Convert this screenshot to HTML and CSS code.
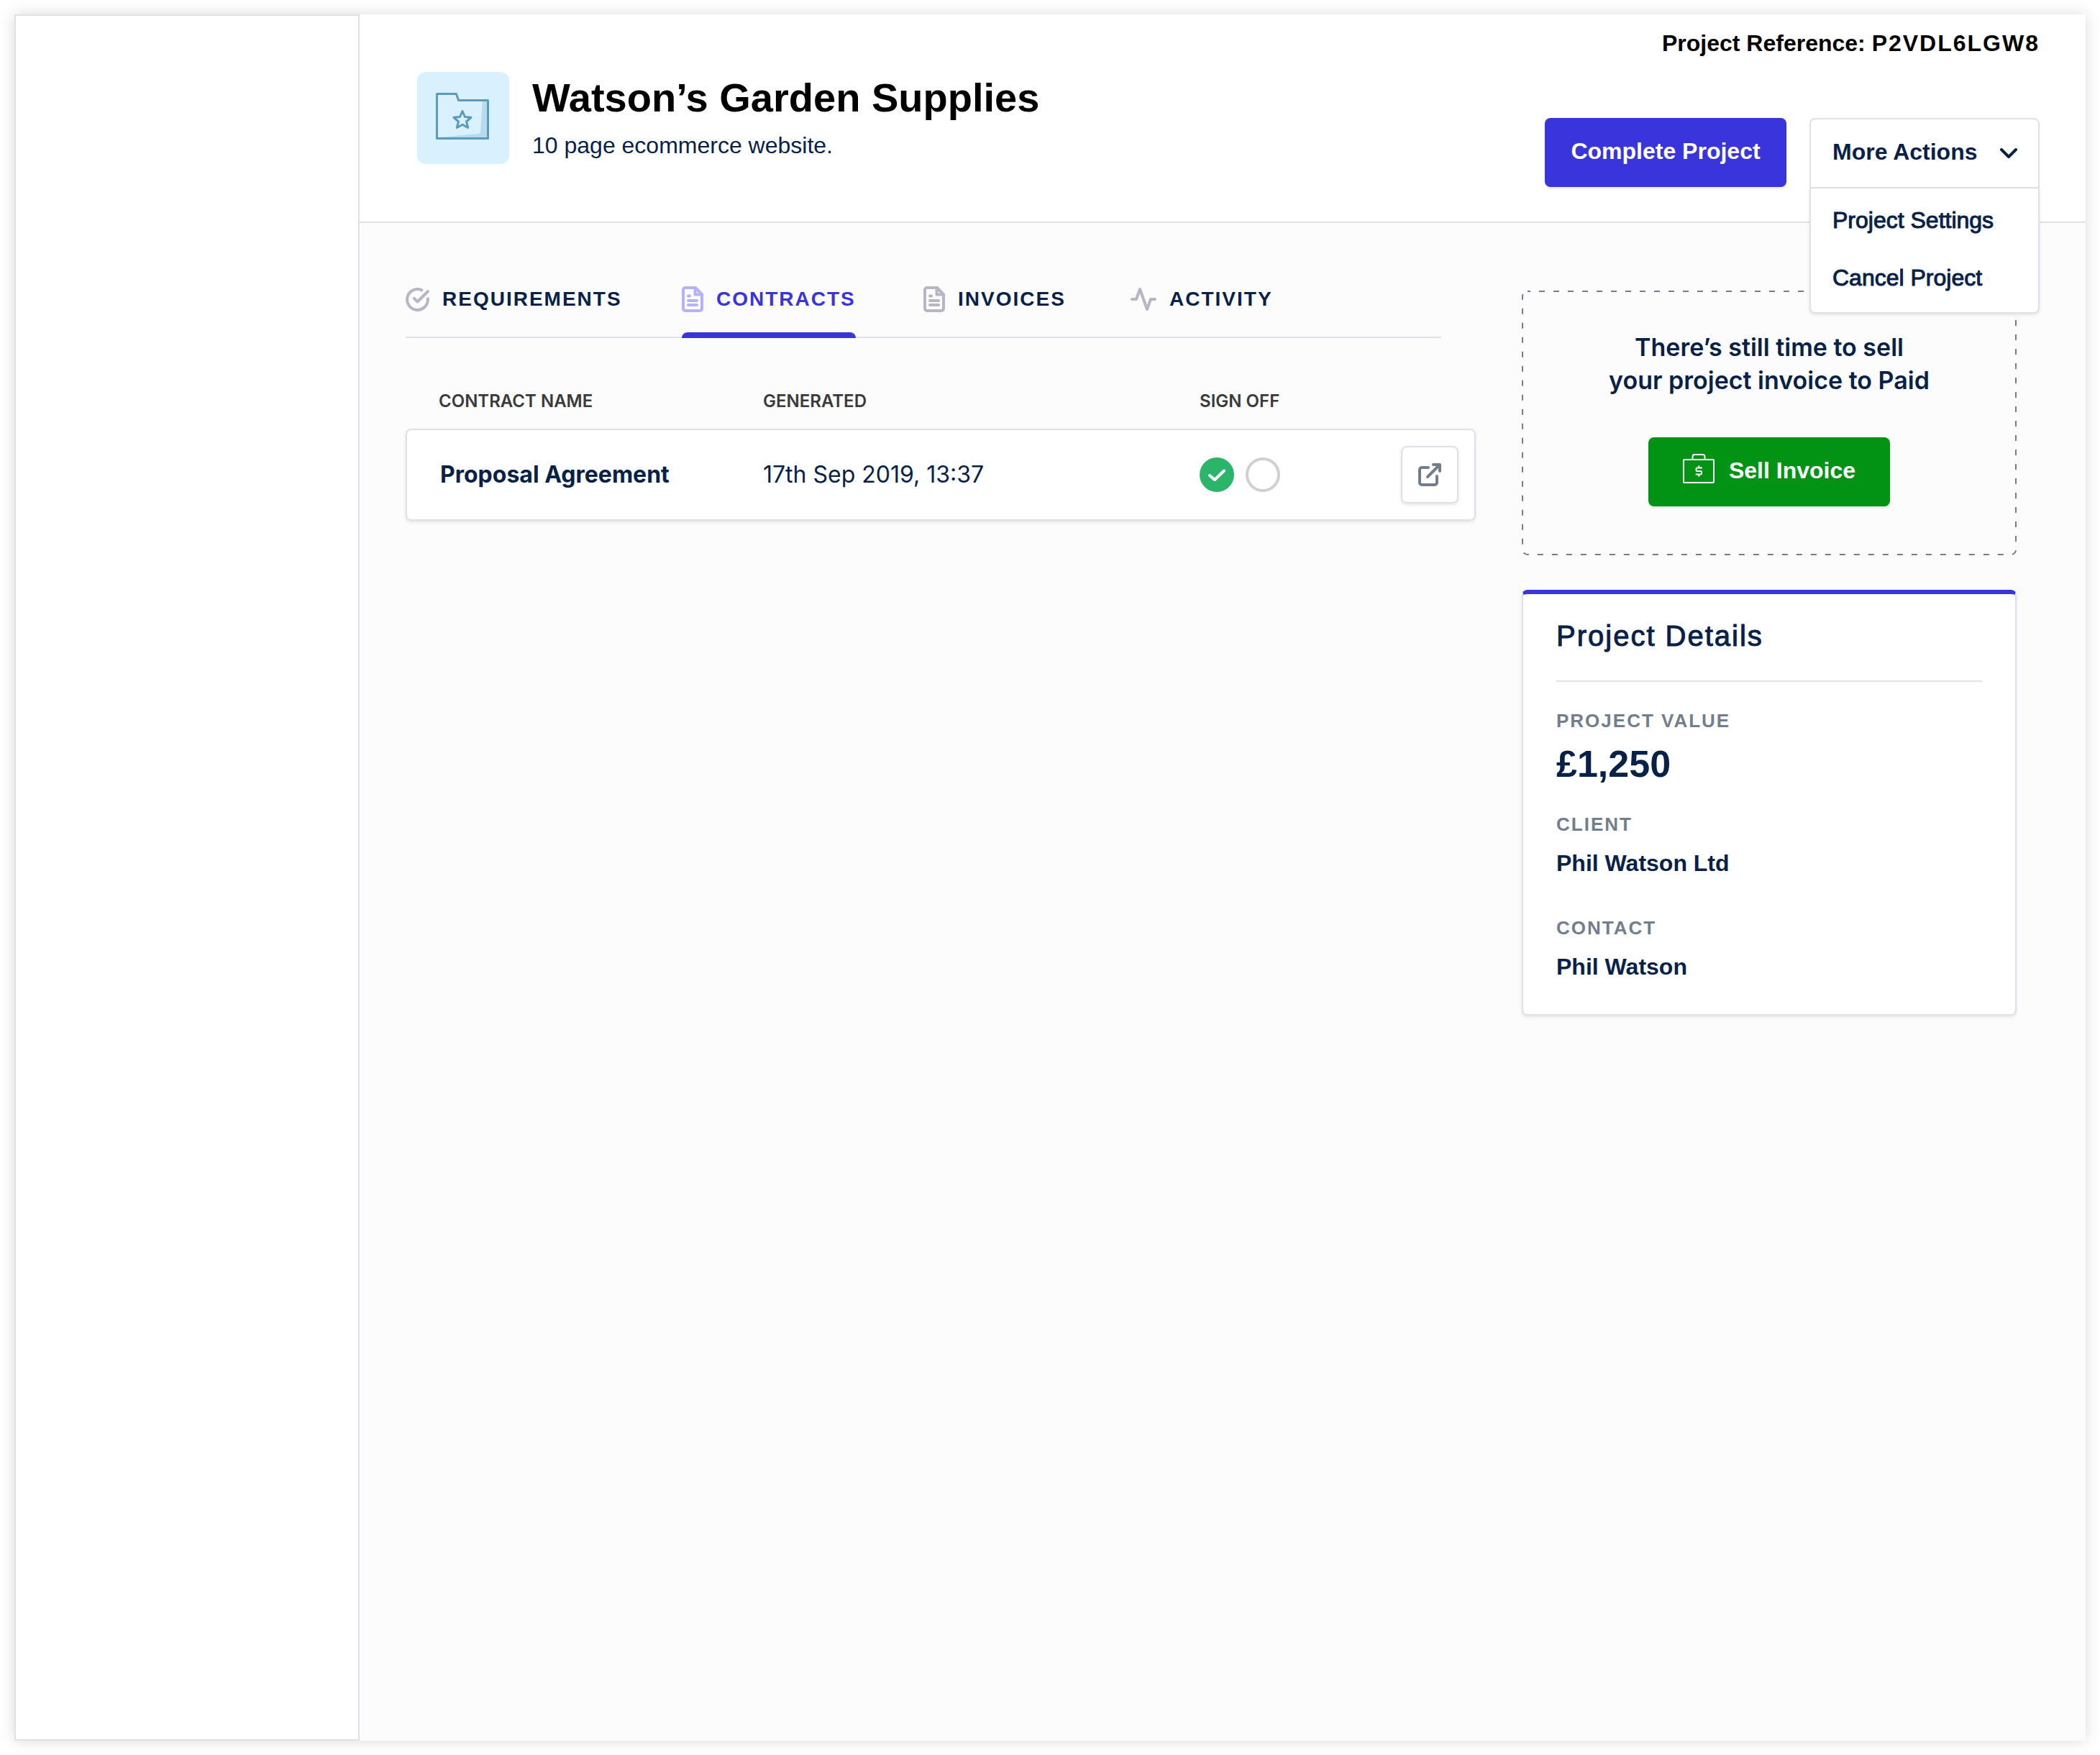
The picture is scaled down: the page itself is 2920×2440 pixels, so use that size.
FILE: index.html
```html
<!DOCTYPE html>
<html lang="en">
<head>
<meta charset="utf-8">
<meta name="viewport" content="width=device-width, initial-scale=1">
<title>Watson’s Garden Supplies</title>
<link rel="stylesheet" href="styles.css">
</head>
<body>
<div class="frame">
  <aside class="sidebar"></aside>
  <main class="main">
    <header class="header">
      <div class="brand">
        <svg class="brand-tile" viewBox="0 0 128 128" aria-hidden="true">
          <path d="M91 40H98V92L31 91L85 86Q88 85.500 88 83Z" fill="#b9daec"/>
          <g fill="none" stroke="#5b9bb9" stroke-width="3" stroke-linejoin="round">
            <path d="M27.500 30.500H54.500L57.500 39.500H98.500V92.500H27.500Z"/>
            <path d="M63 54.500L66.500 62.500L75 63.300L68.500 69L70.700 77.500L63 73.200L55.300 77.500L57.500 69L51 63.300L59.500 62.500Z"/>
          </g>
        </svg>
        <div class="brand-text">
          <h1 class="title">Watson’s Garden Supplies</h1>
          <p class="subtitle">10 page ecommerce website.</p>
        </div>
      </div>
      <div class="header-side">
        <p class="reference">Project Reference: <span class="reference-code">P2VDL6LGW8</span></p>
        <div class="actions">
          <button class="button button-primary" type="button">Complete Project</button>
          <div class="dropdown">
            <button class="dropdown-toggle" type="button" aria-expanded="true">
              More Actions
              <svg class="chevron" viewBox="0 0 26 16" aria-hidden="true"><path d="M3 3L13 13L23 3" fill="none" stroke="currentColor" stroke-width="4" stroke-linecap="round" stroke-linejoin="round"/></svg>
            </button>
            <div class="dropdown-menu">
              <a class="dropdown-item" href="#settings">Project Settings</a>
              <a class="dropdown-item" href="#cancel">Cancel Project</a>
            </div>
          </div>
        </div>
      </div>
    </header>

    <div class="content">
      <section class="primary">
        <nav class="tabs">
          <a class="tab" href="#requirements">
            <svg class="tab-icon icon-check" viewBox="1 1 22 22" aria-hidden="true"><g fill="none" stroke="currentColor" stroke-width="2.700" stroke-linecap="round" stroke-linejoin="round"><path d="M21.600 11.100V12a9.600 9.600 0 1 1-5.700-8.800"/><path d="M21.600 4.500L12 14L9 11"/></g></svg>
            REQUIREMENTS
          </a>
          <a class="tab tab-active" href="#contracts">
            <svg class="tab-icon icon-file" viewBox="0 0 30 36" aria-hidden="true"><g fill="none" stroke="currentColor" stroke-width="4" stroke-linecap="round" stroke-linejoin="round"><path d="M19 2H5a3 3 0 0 0-3 3V31a3 3 0 0 0 3 3H25a3 3 0 0 0 3-3V11.500Z"/><path d="M18.500 2V11.500H28M9 13.500H11M9 20H21M9 26H21" stroke-width="4"/></g></svg>
            CONTRACTS
          </a>
          <a class="tab" href="#invoices">
            <svg class="tab-icon icon-file" viewBox="0 0 30 36" aria-hidden="true"><g fill="none" stroke="currentColor" stroke-width="4" stroke-linecap="round" stroke-linejoin="round"><path d="M19 2H5a3 3 0 0 0-3 3V31a3 3 0 0 0 3 3H25a3 3 0 0 0 3-3V11.500Z"/><path d="M18.500 2V11.500H28M9 13.500H11M9 20H21M9 26H21" stroke-width="4"/></g></svg>
            INVOICES
          </a>
          <a class="tab" href="#activity">
            <svg class="tab-icon icon-activity" viewBox="0 0 36 32" aria-hidden="true"><path d="M34 16H28L23 30L13 2L8 16H2" fill="none" stroke="currentColor" stroke-width="4" stroke-linecap="round" stroke-linejoin="round"/></svg>
            ACTIVITY
          </a>
        </nav>

        <table class="contracts">
          <thead>
            <tr>
              <th class="col-name" scope="col">CONTRACT NAME</th>
              <th class="col-date" scope="col">GENERATED</th>
              <th class="col-sign" scope="col">SIGN OFF</th>
              <td></td>
            </tr>
          </thead>
          <tbody>
            <tr class="contract">
              <td class="contract-name">Proposal Agreement</td>
              <td>17th Sep 2019, 13:37</td>
              <td>
                <div class="signs">
                  <svg class="sign" viewBox="0 0 48 48" role="img" aria-label="Signed"><circle cx="24" cy="24" r="24" fill="#2bb56b"/><path d="M14 25L21 31L34 18.500" fill="none" stroke="#fff" stroke-width="4" stroke-linecap="round" stroke-linejoin="round"/></svg>
                  <svg class="sign" viewBox="0 0 48 48" role="img" aria-label="Not signed"><circle cx="24" cy="24" r="22" fill="#fff" stroke="#d0d0d0" stroke-width="4"/></svg>
                </div>
              </td>
              <td class="contract-open">
                <button class="icon-button" type="button" aria-label="Open contract">
                  <svg class="icon-external" viewBox="0 0 34 34" aria-hidden="true"><g fill="none" stroke="currentColor" stroke-width="4" stroke-linecap="round" stroke-linejoin="round"><path d="M27 19V28a3 3 0 0 1-3 3H6a3 3 0 0 1-3-3V10a3 3 0 0 1 3-3H15"/><path d="M22 3H31V12M14 20L31 3"/></g></svg>
                </button>
              </td>
            </tr>
          </tbody>
        </table>
      </section>

      <aside class="secondary">
        <section class="promo">
          <svg class="promo-outline" aria-hidden="true"><rect class="promo-dashes" x="1" y="1" rx="7"/></svg>
          <h2 class="promo-title">There’s still time to sell<br>your project invoice to Paid</h2>
          <button class="button button-sell" type="button">
            <svg class="icon-sell" viewBox="0 0 44 46" aria-hidden="true"><g fill="none" stroke="currentColor" stroke-width="2" stroke-linecap="round" stroke-linejoin="round"><rect x="1" y="8" width="42" height="32" rx="1"/><path d="M13.500 8V4a3 3 0 0 1 3-3H27.500a3 3 0 0 1 3 3V8"/><path d="M26 19.500H20a1.500 1.500 0 0 0-1.500 1.500V22.500a1.500 1.500 0 0 0 1.500 1.500H24.500a1.500 1.500 0 0 1 1.500 1.500V27a1.500 1.500 0 0 1-1.500 1.500H18.500M22.300 17V19M22.300 29.500V31"/></g></svg>
            Sell Invoice
          </button>
        </section>

        <section class="details">
          <h2 class="details-title">Project Details</h2>
          <dl class="facts">
            <div class="fact">
              <dt class="fact-label">PROJECT VALUE</dt>
              <dd class="fact-amount">£1,250</dd>
            </div>
            <div class="fact">
              <dt class="fact-label">CLIENT</dt>
              <dd class="fact-value">Phil Watson Ltd</dd>
            </div>
            <div class="fact">
              <dt class="fact-label">CONTACT</dt>
              <dd class="fact-value">Phil Watson</dd>
            </div>
          </dl>
        </section>
      </aside>
    </div>
  </main>
</div>
</body>
</html>
```
FILE: styles.css
```css
:root {
  --line: #e0e0e8;
  --navy: #082148;
  --indigo: #3934db;
  --slate: #737e8c;
  --helvetica: "Liberation Sans", Arial, sans-serif;
  --inter: Inter, "Liberation Sans", sans-serif;
}

* {
  box-sizing: border-box;
}

body {
  margin: 0;
  padding: 20px;
  background: #fff;
  color: var(--navy);
  font: 400 32px/40px var(--helvetica);
}

h1, h2, p, dl, dd {
  margin: 0;
}

a {
  color: inherit;
  text-decoration: none;
}

svg {
  display: block;
  flex: none;
}

button {
  color: inherit;
  font: 700 32px/40px var(--helvetica);
  cursor: pointer;
}

.frame {
  display: grid;
  grid-template-columns: 480px 1fr;
  min-height: calc(100vh - 40px);
  background: #fcfcfc;
  box-shadow: 0 0 20px rgba(0, 0, 0, 0.15);
}

.sidebar {
  background: #fff;
  border: 2px solid var(--line);
}

/* Header */

.header {
  display: flex;
  justify-content: space-between;
  padding: 20px 64px 46px 80px;
  background: #fff;
  border-bottom: 2px solid var(--line);
}

.brand {
  display: flex;
  gap: 32px;
  padding-top: 60px;
}

.brand-tile {
  width: 128px;
  height: 128px;
  border-radius: 12px;
  background: #d9f1ff;
}

.brand-text {
  padding-top: 4px;
}

.title {
  color: #000;
  font-size: 56px;
  line-height: 64px;
}

.subtitle {
  padding-top: 14px;
}

.header-side {
  display: flex;
  flex-direction: column;
  align-items: flex-end;
  gap: 84px;
}

.reference {
  color: #000;
  font-weight: 700;
}

.reference-code {
  letter-spacing: 2px;
}

.actions {
  display: flex;
  align-items: flex-start;
  gap: 32px;
}

.button {
  display: flex;
  align-items: center;
  justify-content: center;
  gap: 20px;
  width: 336px;
  height: 96px;
  padding: 0 0 4px;
  border: 0;
  border-radius: 8px;
  color: #fff;
  box-shadow: 0 2px 4px rgba(0, 0, 0, 0.1);
}

.button-primary {
  background: var(--indigo);
}

.dropdown {
  position: relative;
  width: 320px;
}

.dropdown-toggle {
  display: flex;
  align-items: center;
  justify-content: space-between;
  width: 100%;
  height: 98px;
  padding: 0 28px 4px 30px;
  background: #fff;
  border: 2px solid var(--line);
  border-radius: 8px 8px 0 0;
}

.chevron {
  width: 26px;
  height: 16px;
  margin-top: 4px;
}

.dropdown-menu {
  position: absolute;
  z-index: 1;
  top: 100%;
  left: 0;
  right: 0;
  padding: 4px 0 8px;
  background: #fff;
  border: 2px solid var(--line);
  border-top: 0;
  border-radius: 0 0 8px 8px;
  box-shadow: 0 2px 4px rgba(0, 0, 0, 0.1);
}

.dropdown-item {
  display: block;
  padding: 20px 30px;
  -webkit-text-stroke: 1px currentColor;
}

/* Content */

.content {
  display: grid;
  grid-template-columns: 1fr 688px;
  gap: 64px;
  align-items: start;
  padding: 94px 96px 94px 64px;
}

.tabs {
  display: grid;
  grid-template-columns: 384px 336px 288px auto;
  justify-items: start;
  justify-content: start;
  margin-right: 48px;
  border-bottom: 2px solid var(--line);
  font-size: 28px;
  font-weight: 700;
  line-height: 24px;
}

.tab {
  position: relative;
  display: flex;
  align-items: center;
  gap: 18px;
  padding-bottom: 40px;
  letter-spacing: 2px;
  white-space: nowrap;
}

.tab-active {
  color: var(--indigo);
}

.tab-active::after {
  content: "";
  position: absolute;
  right: 0;
  bottom: -2px;
  left: 0;
  height: 8px;
  border-radius: 8px 8px 0 0;
  background: var(--indigo);
}

.tab-icon {
  color: #b8b6c6;
  margin: -6px 0;
}

.tab-active .tab-icon {
  color: #b4b2ff;
}

.icon-check {
  width: 33px;
  height: 33px;
}

.icon-file {
  width: 30px;
  height: 36px;
}

.icon-activity {
  width: 36px;
  height: 32px;
}

.contracts {
  width: 100%;
  margin-top: 72px;
  border-spacing: 0;
  table-layout: fixed;
  font-family: var(--inter);
}

.contracts th {
  padding: 0 0 22px;
  color: #3a3a3a;
  font-size: 24px;
  font-weight: 600;
  line-height: 32px;
  text-align: left;
}

.contracts th:first-child,
.contracts td:first-child {
  padding-left: 46px;
}

.contracts thead td {
  padding: 0;
}

.col-name {
  width: 33.4%;
}

.col-date {
  width: 40.8%;
}

.col-sign {
  width: 14%;
}

.contract {
  border-radius: 8px;
  box-shadow: 0 2px 4px rgba(0, 0, 0, 0.1);
}

.contract td {
  height: 128px;
  padding: 0;
  background: #fff;
  border: solid var(--line);
  border-width: 2px 0;
}

.contract td:first-child {
  border-left-width: 2px;
  border-radius: 8px 0 0 8px;
}

.contract td:last-child {
  border-right-width: 2px;
  border-radius: 0 8px 8px 0;
}

.contract-name {
  font-weight: 700;
}

.signs {
  display: flex;
  gap: 16px;
}

.sign {
  width: 48px;
  height: 48px;
}

.icon-button {
  display: flex;
  align-items: center;
  justify-content: center;
  width: 80px;
  height: 80px;
  margin: 0 22px 0 auto;
  padding: 0;
  background: #fff;
  border: 2px solid var(--line);
  border-radius: 8px;
  box-shadow: 0 2px 4px rgba(0, 0, 0, 0.1);
  color: var(--slate);
}

.icon-external {
  width: 34px;
  height: 34px;
}

/* Right column */

.secondary {
  display: grid;
  gap: 48px;
}

.promo {
  position: relative;
  display: flex;
  flex-direction: column;
  align-items: center;
  gap: 56px;
  padding: 56px 48px 68px;
}

.promo-outline {
  position: absolute;
  inset: 0;
  width: 100%;
  height: 100%;
}

.promo-dashes {
  width: calc(100% - 2px);
  height: calc(100% - 2px);
  fill: none;
  stroke: var(--slate);
  stroke-width: 2px;
  stroke-dasharray: 8 12;
  stroke-dashoffset: 4px;
}

.promo-title {
  font: 600 34px/46px var(--inter);
  text-align: center;
}

.button-sell {
  position: relative;
  background: #029315;
}

.icon-sell {
  width: 44px;
  height: 46px;
}

.details {
  padding: 34px 46px 0;
  background: #fff;
  border: 2px solid var(--line);
  border-top: 6px solid var(--indigo);
  border-radius: 8px;
  box-shadow: 0 2px 4px rgba(0, 0, 0, 0.1);
}

.details-title {
  padding-bottom: 38px;
  border-bottom: 2px solid var(--line);
  font-size: 40px;
  font-weight: 400;
  line-height: 48px;
  letter-spacing: 2px;
  -webkit-text-stroke: 1px currentColor;
}

.facts {
  padding: 38px 0 32px;
}

.fact {
  display: flex;
  flex-direction: column;
  height: 144px;
  font-weight: 700;
}

.fact:last-child {
  height: auto;
  padding-bottom: 14px;
}

.fact-label {
  color: var(--slate);
  font-size: 26px;
  line-height: 32px;
  letter-spacing: 2px;
}

.fact-amount {
  padding-top: 14px;
  font-size: 52px;
  line-height: 60px;
}

.fact-value {
  padding-top: 18px;
}
```
